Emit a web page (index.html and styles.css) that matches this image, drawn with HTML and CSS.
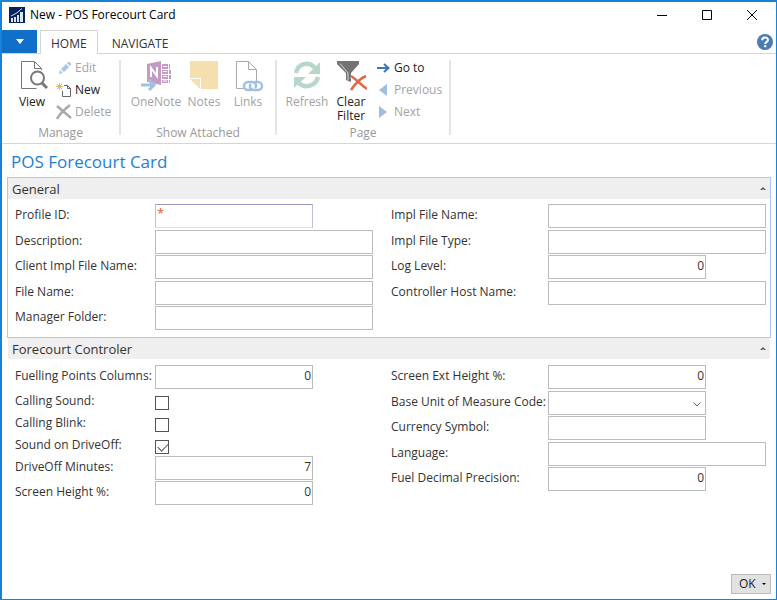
FILE: index.html
```html
<!DOCTYPE html>
<html lang="en">
<head>
<meta charset="utf-8">
<title>New - POS Forecourt Card</title>
<link rel="stylesheet" href="styles.css">
</head>
<body>
<div class="window">
  <header class="titlebar">
    <svg class="app-icon" viewBox="0 0 16 16" aria-hidden="true">
      <path fill="#04245a" d="M0 0h16v16H0z"/>
      <path fill="#dce4ee" d="M2 11h2v4H2zM5 10h2v5H5zM8 8h2v7H8zM11 5h3v10h-3z"/>
      <path fill="none" stroke="#dce4ee" d="M2 9l4-2 3-2 4-3.500"/>
    </svg>
    <span class="window-title">New - POS Forecourt Card</span>
    <div class="window-controls">
      <button type="button" aria-label="Minimize"><svg viewBox="0 0 12 12"><path d="M1 6.500h10"/></svg></button>
      <button type="button" aria-label="Maximize"><svg viewBox="0 0 12 12"><path d="M1.500 1.500h9v9h-9z"/></svg></button>
      <button type="button" aria-label="Close"><svg viewBox="0 0 12 12"><path d="M1 1l10 10M11 1L1 11"/></svg></button>
    </div>
  </header>

  <nav class="tabs">
    <button type="button" class="app-menu" aria-label="Application menu"><svg viewBox="0 0 8 5"><path fill="#fff" d="M0 0h8L4 5z"/></svg></button>
    <a class="tab active" href="#home">HOME</a>
    <a class="tab" href="#navigate">NAVIGATE</a>
    <button type="button" class="help" aria-label="Help">
      <svg viewBox="0 0 16 16"><circle cx="8" cy="8" r="8" fill="#4a7db5"/><path fill="none" stroke="#fff" stroke-width="2" d="M5.200 6.200C5.200 2.500 11 2.700 11 5.900 11 8 8.200 7.800 8.200 10"/><path fill="#fff" d="M7.100 11.200h2.200v2H7.100z"/></svg>
    </button>
  </nav>

  <div class="ribbon" id="home">
    <section class="group manage">
      <div class="commands">
        <button type="button" class="large">
          <svg viewBox="0 0 32 32" fill="none" stroke="#777"><path d="M25.500 10V8.500L18.500 1.500H5.500v27h15M18.500 1.500v7h7"/><circle cx="21.500" cy="18" r="6.500" fill="#fff" stroke-width="2"/><path stroke-width="3" d="M26 23l5 5"/></svg>
          <span>View</span>
        </button>
        <div class="stack">
          <button type="button" class="small" disabled><svg viewBox="0 0 16 16"><path fill="#a8c5e3" d="M3 14l1-4 3 3zM5 9l5-5 3 3-5 5zM11 3l1-1c1-1 4 2 3 3l-1 1z"/></svg><span>Edit</span></button>
          <button type="button" class="small"><svg viewBox="0 0 16 16" fill="none"><path stroke="#666" d="M8 3.500h3.500l3 3v8h-8V9M11.500 3.500v3h3"/><path stroke="#eab560" d="M3.500 1v7M0 4.500h7M1 2l5 5M6 2L1 7"/></svg><span>New</span></button>
          <button type="button" class="small" disabled><svg viewBox="0 0 16 16"><path fill="none" stroke="#aaa" stroke-width="2.500" d="M1 2l14 12M14 1C9 5 4 9 1 15"/></svg><span>Delete</span></button>
        </div>
      </div>
      <h2>Manage</h2>
    </section>
    <section class="group attached">
      <div class="commands">
        <button type="button" class="large wide" disabled>
          <svg viewBox="0 0 32 32"><path fill="#c49bc4" d="M7 4l14-3v24L7 22zM22 4h8v5h-8zM22 10h9v4h-9zM22 15h9v4h-9zM22 20h8v3h-8z"/><path fill="none" stroke="#fff" d="M23 6.500h4M23 11.500h4M23 16.500h4M23 21h4M28.500 4v19"/><path fill="none" stroke="#fff" stroke-width="2" d="M11 17V8l6 8V7"/><path fill="none" stroke="#fff" stroke-width="5" d="M7 25h7"/><path fill="none" stroke="#9fc2e2" stroke-width="3" d="M1 25h12M9 20l5 5-5 5"/></svg>
          <span>OneNote</span>
        </button>
        <button type="button" class="large" disabled>
          <svg viewBox="0 0 32 32"><path fill="#f5dfae" d="M2 1h28v28H13V18H2z"/><path fill="#f5dfae" d="M2 19l10 10V19z"/></svg>
          <span>Notes</span>
        </button>
        <button type="button" class="large" disabled>
          <svg viewBox="0 0 32 32" fill="none"><path stroke="#aaa" d="M12 28.500H4.500v-27h12l8 8V21M16.500 1.500v8h8"/><g stroke="#9fc2e2" stroke-width="2.500"><path d="M20 30h-4a4 4 0 0 1 0-8h4c4 0 5 4 3 6"/><path d="M22 22h4a4 4 0 0 1 0 8h-4c-4 0-5-4-3-6"/></g></svg>
          <span>Links</span>
        </button>
      </div>
      <h2>Show Attached</h2>
    </section>
    <section class="group page">
      <div class="commands">
        <button type="button" class="large" disabled>
          <svg viewBox="0 0 32 32"><path fill="none" stroke="#b9d7c9" stroke-width="4.500" d="M5 13C7 3 18 1 24 8M27 17c-2 9-13 12-19 6"/><path fill="#b9d7c9" d="M29 2v12H17zM3 28V17h12z"/></svg>
          <span>Refresh</span>
        </button>
        <button type="button" class="large">
          <svg viewBox="0 0 32 32"><path fill="#737373" d="M2 1h22v3l-8 9v9l-5-2v-7L2 4z"/><path fill="none" stroke="#d8d8d8" d="M5 3.500l8 9.500v7"/><path fill="none" stroke="#fff" stroke-width="5" d="M17 16l13 13M30 16L17 29"/><path fill="none" stroke="#df6849" stroke-width="2.500" d="M16 16c6 4 9 8 16 13M31 16c-5 2-11 8-15 14"/></svg>
          <span>Clear Filter</span>
        </button>
        <div class="stack">
          <button type="button" class="small"><svg viewBox="0 0 16 16"><path fill="none" stroke="#3f77b5" stroke-width="2" d="M2 8h11M9 4l4.500 4L9 12"/></svg><span>Go to</span></button>
          <button type="button" class="small" disabled><svg viewBox="0 0 16 16"><path fill="#a0bddd" d="M12 2v12L4 8z"/></svg><span>Previous</span></button>
          <button type="button" class="small" disabled><svg viewBox="0 0 16 16"><path fill="#a0bddd" d="M4 2v12l8-6z"/></svg><span>Next</span></button>
        </div>
      </div>
      <h2>Page</h2>
    </section>
  </div>

  <main>
    <h1>POS Forecourt Card</h1>
    <form id="card">
      <section class="fasttab selected">
        <h2><button type="button" class="fasttab-head">General<svg viewBox="0 0 6 4"><path d="M0 3l3-3 3 3H4L3 2 2 3z"/></svg></button></h2>
        <div class="fields">
          <div class="column">
            <div class="field"><label for="profile">Profile ID:</label><span class="required short"><input id="profile" type="text" required></span></div>
            <div class="field"><label for="desc">Description:</label><input id="desc" type="text"></div>
            <div class="field"><label for="client">Client Impl File Name:</label><input id="client" type="text"></div>
            <div class="field"><label for="file">File Name:</label><input id="file" type="text"></div>
            <div class="field"><label for="folder">Manager Folder:</label><input id="folder" type="text"></div>
          </div>
          <div class="column right">
            <div class="field"><label for="implname">Impl File Name:</label><input id="implname" type="text"></div>
            <div class="field"><label for="impltype">Impl File Type:</label><input id="impltype" type="text"></div>
            <div class="field"><label for="log">Log Level:</label><input id="log" class="short number" type="text" value="0"></div>
            <div class="field"><label for="host">Controller Host Name:</label><input id="host" type="text"></div>
            <div class="field"></div>
          </div>
        </div>
      </section>
      <section class="fasttab">
        <h2><button type="button" class="fasttab-head">Forecourt Controler<svg viewBox="0 0 6 4"><path d="M0 3l3-3 3 3H4L3 2 2 3z"/></svg></button></h2>
        <div class="fields">
          <div class="column">
            <div class="field"><label for="columns">Fuelling Points Columns:</label><input id="columns" class="short number" type="text" value="0"></div>
            <div class="field check"><label for="sound">Calling Sound:</label><input id="sound" type="checkbox"></div>
            <div class="field check"><label for="blink">Calling Blink:</label><input id="blink" type="checkbox"></div>
            <div class="field check"><label for="driveoff">Sound on DriveOff:</label><input id="driveoff" type="checkbox" checked></div>
            <div class="field"><label for="minutes">DriveOff Minutes:</label><input id="minutes" class="short number" type="text" value="7"></div>
            <div class="field"><label for="height">Screen Height %:</label><input id="height" class="short number" type="text" value="0"></div>
          </div>
          <div class="column right">
            <div class="field"><label for="ext">Screen Ext Height %:</label><input id="ext" class="short number" type="text" value="0"></div>
            <div class="field"><label for="unit">Base Unit of Measure Code:</label><span class="dropdown short"><select id="unit"><option></option></select><svg viewBox="0 0 8 5"><path d="M.5.500L4 4 7.500.500"/></svg></span></div>
            <div class="field"><label for="currency">Currency Symbol:</label><input id="currency" class="short" type="text"></div>
            <div class="field"><label for="language">Language:</label><input id="language" type="text"></div>
            <div class="field"><label for="precision">Fuel Decimal Precision:</label><input id="precision" class="short number" type="text" value="0"></div>
          </div>
        </div>
      </section>
    </form>
  </main>

  <footer>
    <button type="submit" form="card" class="ok">OK<svg viewBox="0 0 4 2"><path d="M0 0h4L2 2z"/></svg></button>
  </footer>
</div>
</body>
</html>
```
FILE: styles.css
```css
* { box-sizing: border-box; }

body {
  margin: 0;
  font: 12px/16px "Open Sans", "Noto Sans", sans-serif;
  color: #333;
  background: #fff;
}

button, input, select { font: inherit; color: inherit; }
button { padding: 0; border: 0; background: none; }
svg { display: block; flex: none; }
h1, h2 { margin: 0; font-weight: 400; }

.window {
  display: flex;
  flex-direction: column;
  min-height: 100vh;
  border: solid #1881d8;
  border-width: 2px 1px 1px 2px;
}

/* Title bar */
.titlebar { display: flex; align-items: center; height: 26px; padding-left: 7px; color: #000; }
.app-icon { width: 16px; height: 16px; }
.window-title { margin-left: 5px; }
.window-controls { display: flex; margin-left: auto; padding-right: 2px; }
.window-controls button { display: grid; place-items: center; width: 45px; height: 26px; }
.window-controls svg { width: 12px; height: 12px; fill: none; stroke: #000; }

/* Tabs */
.tabs { display: flex; align-items: flex-end; height: 26px; padding-top: 2px; border-bottom: 1px solid #d5d5d5; }
.app-menu { display: grid; place-items: center; width: 35px; height: 23px; margin-right: 3px; align-self: flex-start; background: #1070c9; }
.app-menu svg { width: 8px; height: 5px; }
.tab { height: 23px; padding: 5px 10px 0; border: 1px solid transparent; border-bottom: 0; color: #333; text-decoration: none; }
.tab.active { margin-bottom: -1px; height: 24px; border-color: #d5d5d5; background: #fff; }
.tab + .tab { margin-left: 3px; }
.help { margin: 0 3px 3px auto; }
.help svg { width: 16px; height: 16px; }

/* Ribbon */
.ribbon { display: flex; height: 90px; padding: 6px 0 8px; border-bottom: 1px solid #d5d5d5; }
.group { display: flex; flex-direction: column; border-right: 2px solid #e4e4e4; }
.group h2 { flex: none; font-size: 12px; line-height: 16px; color: #999; text-align: center; }
.commands { display: flex; flex: none; height: 65px; padding-left: 8px; }
.manage { width: 119px; }
.attached { width: 156px; }
.page { width: 174px; }
.attached .commands { padding-left: 9px; }
.large { display: flex; flex-direction: column; align-items: center; width: 44px; line-height: 14px; color: #222; }
.large svg { width: 32px; height: 32px; }
.large span { margin-top: 3px; }
.large.wide { width: 52px; }
.small { display: flex; align-items: center; gap: 3px; height: 22px; color: #222; white-space: nowrap; }
.small svg { width: 16px; height: 16px; }
.large:disabled, .small:disabled { color: #a3a3a3; }
.stack { display: flex; flex-direction: column; margin: -3px 0 0 2px; }

/* Card */
main { flex: 1; padding: 6px 5px 0; }
h1 { padding-left: 4px; font-size: 17px; line-height: 24px; color: #1e7fd0; }
.fasttab { border: 1px solid transparent; }
.selected { margin-top: 3px; border-color: #a9c8f8; }
.selected + .fasttab { border-top: 0; }
.fasttab h2 { line-height: 0; }
.fasttab-head {
  display: flex;
  align-items: center;
  justify-content: space-between;
  width: 100%;
  height: 21px;
  padding: 0 4px;
  font-size: 13px;
  line-height: 16px;
  background: #efefef;
}
.fasttab-head svg { width: 6px; height: 4px; fill: #555; }
.fields { display: grid; grid-template-columns: 358fr 375fr; gap: 18px; padding: 5px 4px 6px 7px; align-items: start; }
.selected + .fasttab .fields { padding-top: 6px; }
.column { display: flex; flex-direction: column; justify-content: space-between; min-height: 127px; }
.field { display: grid; grid-template-columns: 140px 1fr; height: 25px; }
.right .field { grid-template-columns: 157px 1fr; }
.field label { line-height: 21px; white-space: nowrap; }
.field input[type="text"], .dropdown select {
  width: 100%;
  height: 24px;
  padding: 0 1px 3px;
  border: 1px solid #bcbcbc;
  border-radius: 0;
  background: #fff;
  outline: 0;
}
.field .short, .field input.short { width: 158px; }
.field input.number { text-align: right; }
.required { position: relative; }
.required::before { content: "*"; position: absolute; left: 2px; top: 1px; font-size: 13px; color: #e4572e; }
.field .required input { border-color: #9d97c4 #c0bddb #e0e0ee; }
.field.check { height: 22px; }
.check input {
  appearance: none;
  width: 14px;
  height: 14px;
  margin: 6px 0 0;
  border: 1px solid #555;
}
.check input:checked::before {
  content: "";
  display: block;
  width: 9px;
  height: 5px;
  margin: 2px 0 0 2px;
  border: solid #555;
  border-width: 0 0 1px 1px;
  transform: rotate(-45deg);
}
.dropdown { position: relative; }
.dropdown select { appearance: none; }
.dropdown svg { position: absolute; right: 5px; top: 11px; width: 8px; height: 5px; fill: none; stroke: #666; pointer-events: none; }

footer { display: flex; justify-content: flex-end; padding: 0 5px 5px; }
.ok { display: flex; align-items: center; justify-content: space-between; width: 40px; height: 20px; padding: 0 4px 0 7px; border: 1px solid #bcbcbc; background: #e1e1e1; color: #222; }
.ok svg { width: 4px; height: 2px; }
```
